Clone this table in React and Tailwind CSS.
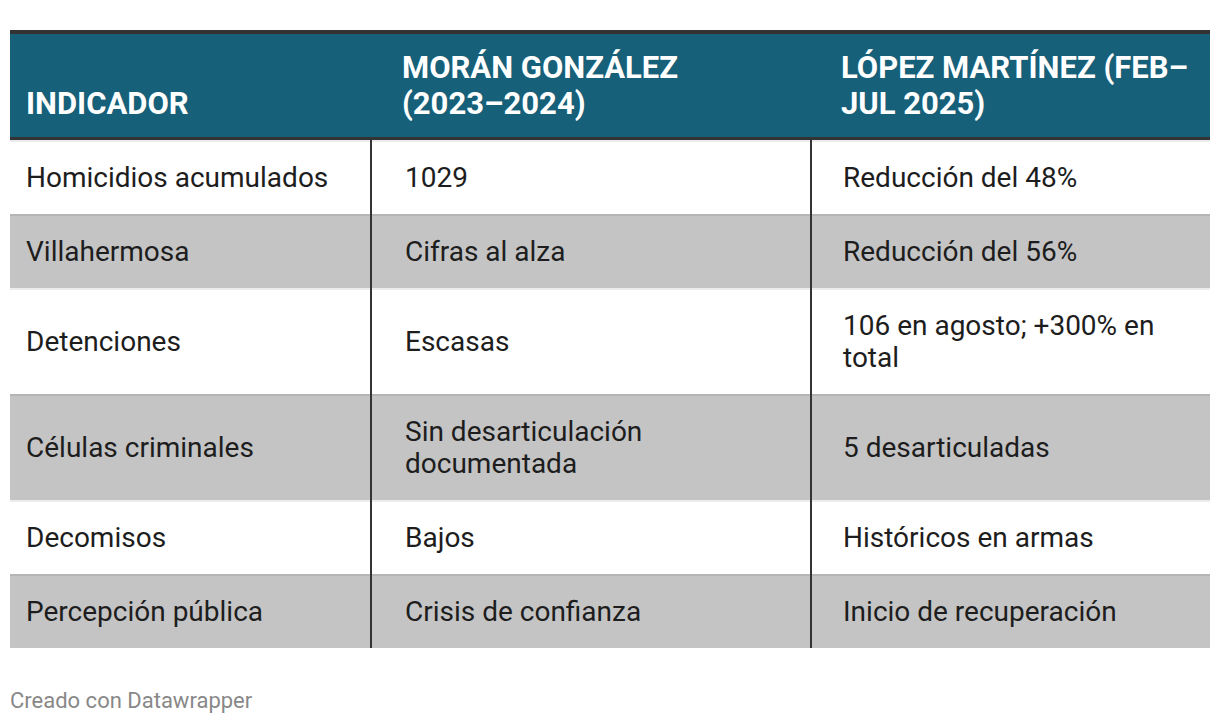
const rows = [
  ['Homicidios acumulados', '1029', 'Reducción del 48%'],
  ['Villahermosa', 'Cifras al alza', 'Reducción del 56%'],
  ['Detenciones', 'Escasas', '106 en agosto; +300% en total'],
  ['Células criminales', 'Sin desarticulación documentada', '5 desarticuladas'],
  ['Decomisos', 'Bajos', 'Históricos en armas'],
  ['Percepción pública', 'Crisis de confianza', 'Inicio de recuperación'],
];

const cols = 'grid grid-cols-[360px_440px_400px]';

export default function App() {
  return (
    <div className="min-h-screen bg-white pt-[30px] px-[10px] font-['Roboto','Liberation_Sans',sans-serif]">
      <div className="w-[1200px]">
        <div className={`${cols} bg-[#17607a] border-t-4 border-b-[3px] border-[#333] text-white font-bold uppercase text-[31px] leading-[36px]`}>
          <div className="flex items-end pl-[16px] pr-4 pt-4 pb-[15px]">Indicador</div>
          <div className="flex items-end pl-[32px] pr-[28px] pt-4 pb-[15px]">Morán González (2023–2024)</div>
          <div className="flex items-end pl-[31px] pr-3 pt-4 pb-[15px]">López Martínez (Feb–Jul 2025)</div>
        </div>

        {rows.map((r, i) => (
          <div
            key={r[0]}
            className={`${cols} text-[28px] leading-[32px] text-[#1d1d1d] shadow-[inset_0_2px_0_rgba(0,0,0,0.075)] ${i % 2 ? 'bg-[#c4c4c4]' : 'bg-white'}`}
          >
            <div className="flex items-center pl-[16px] pr-4 pt-[22px] pb-5">{r[0]}</div>
            <div className="flex items-center border-l-2 border-[#333] pl-[33px] pr-[28px] pt-[22px] pb-5">{r[1]}</div>
            <div className="flex items-center border-l-2 border-[#333] pl-[31px] pr-3 pt-[22px] pb-5">{r[2]}</div>
          </div>
        ))}

        <p className="mt-[40px] text-[22px] leading-[26px] text-[#888]">Creado con Datawrapper</p>
      </div>
    </div>
  );
}
